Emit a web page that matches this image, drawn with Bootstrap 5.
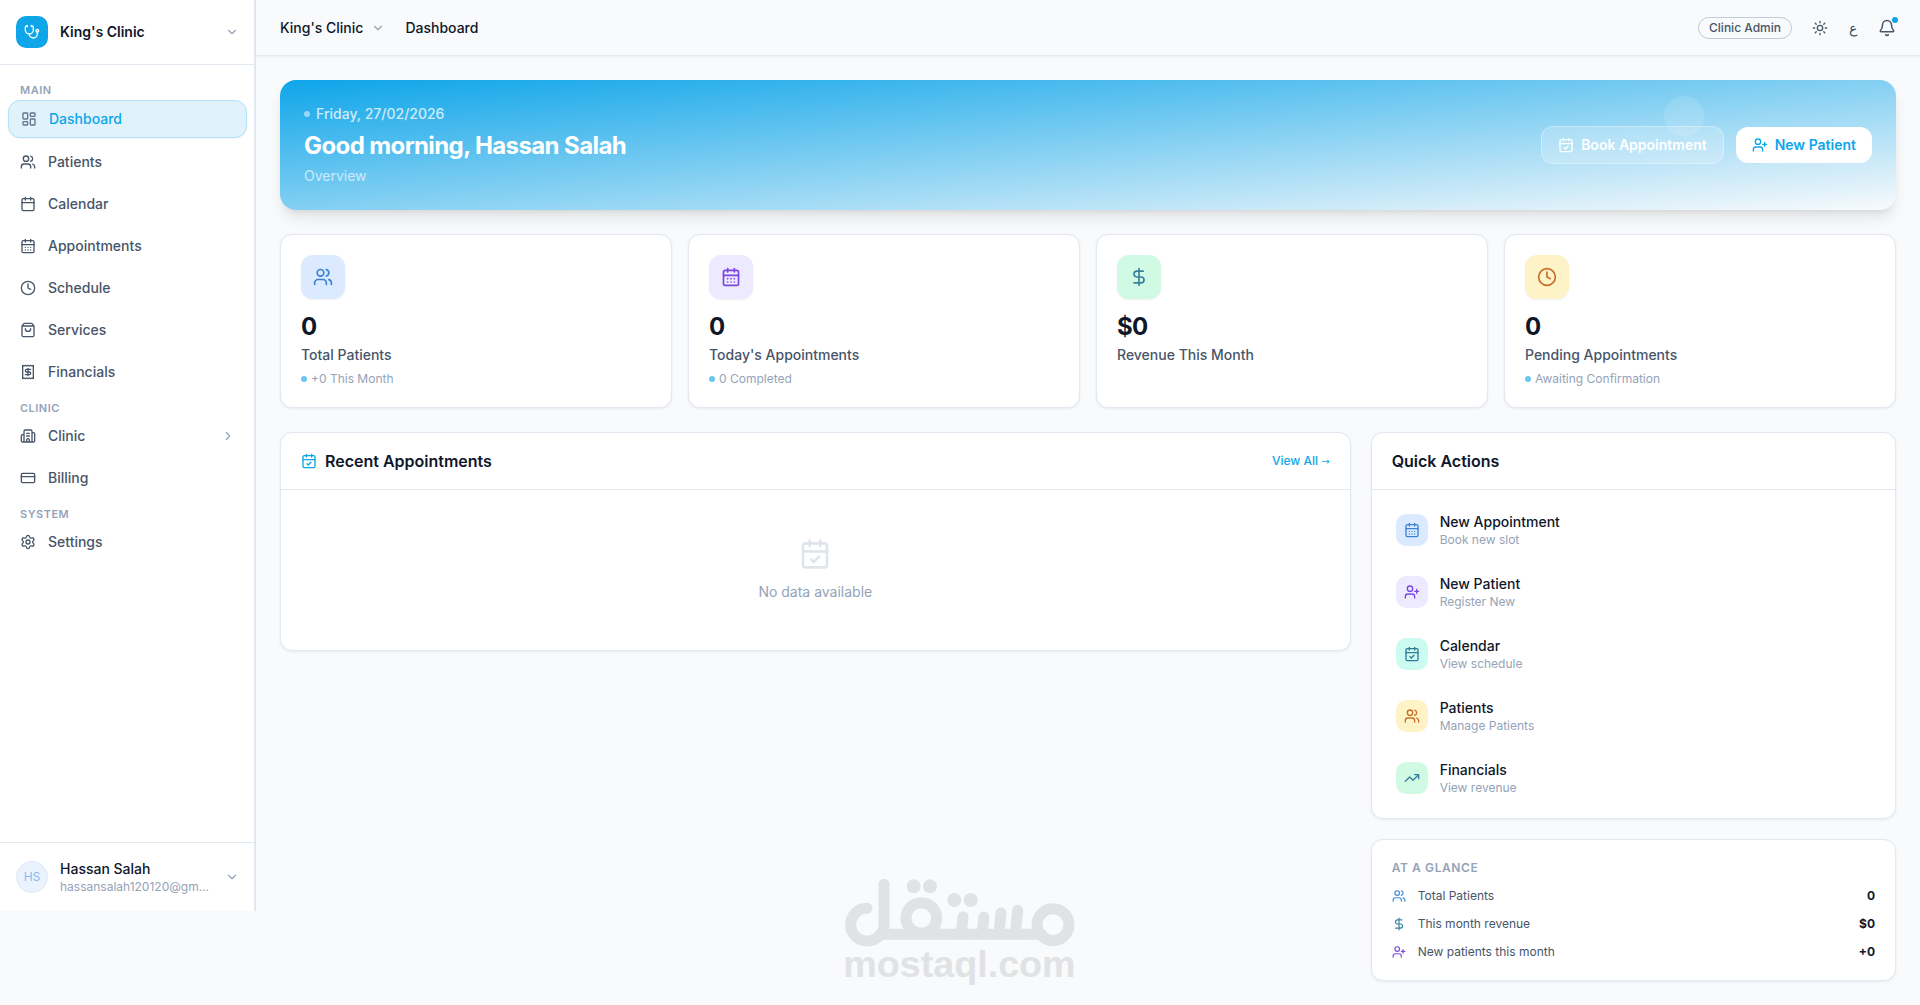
<!DOCTYPE html>
<html lang="en">
<head>
<meta charset="utf-8">
<meta name="viewport" content="width=device-width, initial-scale=1">
<title>King's Clinic – Dashboard</title>
<link href="https://cdn.jsdelivr.net/npm/bootstrap@5.3.0/dist/css/bootstrap.min.css" rel="stylesheet">
<style>
:root{--brand:#0ea5e9;--ink:#0f172a;--body:#475569;--soft:#94a3b8;--line:#e2e8f0;--page:#f8fafc}
body{font-family:Inter,"Noto Sans",sans-serif;font-size:14px;line-height:20px;color:var(--ink);background:var(--page)}
a{text-decoration:none;color:inherit}
button{font:inherit;color:inherit}
.plain-btn{background:none;border:0;padding:0;text-align:start}
.ico{width:16px;height:16px;flex:none;fill:none;stroke:currentColor;stroke-width:2;stroke-linecap:round;stroke-linejoin:round}
.ico-14{width:14px;height:14px}
.ico-18{width:18px;height:18px}
.ico-20{width:20px;height:20px}
.ico-32{width:32px;height:32px}
.fs-12{font-size:12px;line-height:16px}
.soft{color:var(--soft)}
.gap-12{gap:12px}

.side{width:256px;height:calc(100vh - 94px);background:#fff;border-right:2px solid var(--line)}
.side-head,.side-foot{padding:16px 15px 16px 16px}
.side-head{border-bottom:1px solid var(--line)}
.side-foot{border-top:1px solid var(--line)}
.logo-box{width:32px;height:32px;border-radius:10px;background:var(--brand);color:#fff}
.side-nav{padding:7px 7px 0 8px}
.nav-title{font-size:11px;line-height:16px;font-weight:600;letter-spacing:.5px;color:var(--soft);padding:10px 12px 2px;margin:0}
.nav-item-link{display:flex;align-items:center;gap:12px;padding:8px 12px;color:var(--body);font-weight:500;margin-bottom:6px}
.nav-group .nav-item-link:last-child{margin-bottom:0}
.nav-item-link.active{color:var(--brand);background:#e0f3fc;border:1px solid #b3e1f8;border-radius:12px;box-shadow:0 1px 2px rgba(15,23,42,.05)}
.nav-item-link.active .ico{color:#64748b}
.avatar{width:32px;height:32px;border-radius:50%;background:#eaf3fd;border:1px solid #dfe9f5;color:#8db9ea}

.topbar{height:56px;padding:0 24px;border-bottom:1px solid var(--line);box-shadow:0 1px 2px rgba(15,23,42,.05)}
.clinic-switch{margin-right:20px}
.top-tools{color:var(--body)}
.role{border:1px solid #c3ccda;border-radius:11px;padding:2px 10px;margin-right:20px}
.lang-btn{width:28px;margin:0 11px;text-align:center}
.bell-dot{position:absolute;width:6px;height:6px;border-radius:50%;background:var(--brand);top:-2px;right:-2px}

.page{padding:24px}
.hero{position:relative;padding:24px;border-radius:16px;background:linear-gradient(to bottom right,var(--brand),var(--page));box-shadow:0 10px 15px -3px rgba(0,0,0,.1),0 4px 6px -4px rgba(0,0,0,.1);color:#fff}
.hero-bubble{position:absolute;top:16px;right:192px;width:40px;height:40px;border-radius:50%;background:rgba(255,255,255,.12)}
.hero h1{font-size:24px;line-height:32px;font-weight:700;letter-spacing:-.6px;margin:6px 0 4px}
.hero-date{gap:6px}
.hero-sub{opacity:.65}
.dot{width:6px;height:6px;border-radius:50%;background:#6bc5f1;flex:none}
.hero .dot{background:rgba(255,255,255,.5)}
.hero-btn{position:relative;display:flex;align-items:center;gap:7px;padding:8px 16px;border:0;border-radius:12px;font-weight:600}
.hero-btn.ghost{background:rgba(255,255,255,.2);border:1px solid rgba(255,255,255,.3);color:#fff}
.hero-btn.solid{background:#fff;color:var(--brand)}

.panel{background:#fff;border:1px solid var(--line);border-radius:12px;box-shadow:0 1px 3px rgba(15,23,42,.07)}
.panel-top{padding:18px 20px;border-bottom:1px solid var(--line)}
.panel-top h2{font-size:16px;line-height:20px;font-weight:600;margin:0}
.brand-ink{color:var(--brand)}
.arrow{font-family:"DejaVu Sans",sans-serif;font-size:10px}
.stats{--bs-gutter-x:16px;margin-top:24px}
.boards{--bs-gutter-x:20px;margin-top:24px}
.stat{padding:20px;height:100%}
.tile{width:44px;height:44px;border-radius:12px;box-shadow:0 1px 2px rgba(15,23,42,.07)}
.tile-sm{width:32px;height:32px;border-radius:10px}
.figure-num{font-size:24px;line-height:32px;font-weight:700;letter-spacing:-.6px;margin-top:12px}
.stat-label{color:var(--body);font-weight:500;margin:2px 0 6px}
.blue{background:#dbeafe;color:#3b82d6}
.violet{background:#ede9fe;color:#7b47e3}
.green{background:#d1fae5;color:#37809d}
.amber{background:#fef3c7;color:#c86f2b}
.teal{background:#ccfbf1;color:#2f7b98}
.empty{padding:48px 20px}
.empty .ico{color:#e0e5eb}
.actions{padding:10px 12px;gap:2px}
.action{padding:12px}
.glance{padding:20px;margin-top:20px}
.glance h2{font-size:12px;line-height:16px;font-weight:600;letter-spacing:.6px;color:var(--soft);margin:0}
.glance-name{color:var(--body)}
.g-blue{color:#3b8fdc}
.g-green{color:#37809d}
.g-violet{color:#7c4ae6}

.watermark{position:absolute;left:50%;bottom:0;width:280px;height:145px;transform:translateX(-50%);pointer-events:none}
</style>
<script src="https://cdn.jsdelivr.net/npm/bootstrap@5.3.0/dist/js/bootstrap.bundle.min.js" defer></script>
</head>
<body>
<svg class="d-none" aria-hidden="true">
<symbol id="i-steth" viewBox="0 0 24 24"><path d="M11 2v2M5 2v2M5 3H4a2 2 0 0 0-2 2v4a6 6 0 0 0 12 0V5a2 2 0 0 0-2-2h-1M8 15a6 6 0 0 0 12 0v-3"/><circle cx="20" cy="10" r="2"/></symbol>
<symbol id="i-down" viewBox="0 0 24 24"><path d="m6 9 6 6 6-6"/></symbol>
<symbol id="i-right" viewBox="0 0 24 24"><path d="m9 18 6-6-6-6"/></symbol>
<symbol id="i-dash" viewBox="0 0 24 24"><rect width="7" height="9" x="3" y="3" rx="1"/><rect width="7" height="5" x="14" y="3" rx="1"/><rect width="7" height="9" x="14" y="12" rx="1"/><rect width="7" height="5" x="3" y="16" rx="1"/></symbol>
<symbol id="i-users" viewBox="0 0 24 24"><path d="M16 21v-2a4 4 0 0 0-4-4H6a4 4 0 0 0-4 4v2M16 3.128a4 4 0 0 1 0 7.744M22 21v-2a4 4 0 0 0-3-3.87"/><circle cx="9" cy="7" r="4"/></symbol>
<symbol id="i-cal" viewBox="0 0 24 24"><path d="M8 2v4M16 2v4M3 10h18"/><rect width="18" height="18" x="3" y="4" rx="2"/></symbol>
<symbol id="i-days" viewBox="0 0 24 24"><path d="M8 2v4M16 2v4M3 10h18M8 14h.01M12 14h.01M16 14h.01M8 18h.01M12 18h.01M16 18h.01"/><rect width="18" height="18" x="3" y="4" rx="2"/></symbol>
<symbol id="i-check" viewBox="0 0 24 24"><path d="M8 2v4M16 2v4M3 10h18m-12 6 2 2 4-4"/><rect width="18" height="18" x="3" y="4" rx="2"/></symbol>
<symbol id="i-clock" viewBox="0 0 24 24"><circle cx="12" cy="12" r="10"/><path d="M12 6v6l4 2"/></symbol>
<symbol id="i-bag" viewBox="0 0 24 24"><path d="M16 10a4 4 0 0 1-8 0M3.103 6.034h17.794M3.4 5.467a2 2 0 0 0-.4 1.2V20a2 2 0 0 0 2 2h14a2 2 0 0 0 2-2V6.667a2 2 0 0 0-.4-1.2l-2-2.667A2 2 0 0 0 17 2H7a2 2 0 0 0-1.6.8z"/></symbol>
<symbol id="i-receipt" viewBox="0 0 24 24"><path d="M4 2v20l2-1 2 1 2-1 2 1 2-1 2 1 2-1 2 1V2l-2 1-2-1-2 1-2-1-2 1-2-1-2 1ZM16 8h-6a2 2 0 1 0 0 4h4a2 2 0 1 1 0 4H8M12 17.5v-11"/></symbol>
<symbol id="i-building" viewBox="0 0 24 24"><path d="M10 12h4M10 8h4M14 21v-3a2 2 0 0 0-4 0v3M6 10H4a2 2 0 0 0-2 2v7a2 2 0 0 0 2 2h16a2 2 0 0 0 2-2V9a2 2 0 0 0-2-2h-2M6 21V5a2 2 0 0 1 2-2h8a2 2 0 0 1 2 2v16"/></symbol>
<symbol id="i-card" viewBox="0 0 24 24"><rect width="20" height="14" x="2" y="5" rx="2"/><path d="M2 10h20"/></symbol>
<symbol id="i-gear" viewBox="0 0 24 24"><path d="M9.671 4.136a2.34 2.34 0 0 1 4.659 0 2.34 2.34 0 0 0 3.319 1.915 2.34 2.34 0 0 1 2.33 4.033 2.34 2.34 0 0 0 0 3.831 2.34 2.34 0 0 1-2.33 4.033 2.34 2.34 0 0 0-3.319 1.915 2.34 2.34 0 0 1-4.659 0 2.34 2.34 0 0 0-3.32-1.915 2.34 2.34 0 0 1-2.33-4.033 2.34 2.34 0 0 0 0-3.831A2.34 2.34 0 0 1 6.35 6.051a2.34 2.34 0 0 0 3.319-1.915"/><circle cx="12" cy="12" r="3"/></symbol>
<symbol id="i-sun" viewBox="0 0 24 24"><circle cx="12" cy="12" r="4"/><path d="M12 2v2M12 20v2M4.93 4.93l1.41 1.41M17.66 17.66l1.41 1.41M2 12h2M20 12h2M6.34 17.66l-1.41 1.41M19.07 4.93l-1.41 1.41"/></symbol>
<symbol id="i-bell" viewBox="0 0 24 24"><path d="M10.268 21a2 2 0 0 0 3.464 0M3.262 15.326A1 1 0 0 0 4 17h16a1 1 0 0 0 .74-1.673C19.41 13.956 18 12.499 18 8A6 6 0 0 0 6 8c0 4.499-1.411 5.956-2.738 7.326"/></symbol>
<symbol id="i-userplus" viewBox="0 0 24 24"><path d="M16 21v-2a4 4 0 0 0-4-4H6a4 4 0 0 0-4 4v2M19 8v6M22 11h-6"/><circle cx="9" cy="7" r="4"/></symbol>
<symbol id="i-dollar" viewBox="0 0 24 24"><path d="M12 2v20M17 5H9.5a3.5 3.5 0 0 0 0 7h5a3.5 3.5 0 0 1 0 7H6"/></symbol>
<symbol id="i-trend" viewBox="0 0 24 24"><path d="M16 7h6v6M22 7l-8.5 8.5-5-5L2 17"/></symbol>
</svg>

<div class="d-flex align-items-start position-relative min-vh-100">
  <aside class="side d-flex flex-column flex-shrink-0">
    <button type="button" class="plain-btn side-head d-flex align-items-center gap-12">
      <span class="logo-box d-flex align-items-center justify-content-center"><svg class="ico"><use href="#i-steth"/></svg></span>
      <span class="fw-semibold flex-grow-1">King's Clinic</span>
      <svg class="ico ico-14 soft"><use href="#i-down"/></svg>
    </button>
    <nav class="side-nav flex-grow-1" aria-label="Main navigation">
      <div class="nav-group">
        <p class="nav-title">MAIN</p>
        <a class="nav-item-link active" href="#" aria-current="page"><svg class="ico"><use href="#i-dash"/></svg>Dashboard</a>
        <a class="nav-item-link" href="#"><svg class="ico"><use href="#i-users"/></svg>Patients</a>
        <a class="nav-item-link" href="#"><svg class="ico"><use href="#i-cal"/></svg>Calendar</a>
        <a class="nav-item-link" href="#"><svg class="ico"><use href="#i-days"/></svg>Appointments</a>
        <a class="nav-item-link" href="#"><svg class="ico"><use href="#i-clock"/></svg>Schedule</a>
        <a class="nav-item-link" href="#"><svg class="ico"><use href="#i-bag"/></svg>Services</a>
        <a class="nav-item-link" href="#"><svg class="ico"><use href="#i-receipt"/></svg>Financials</a>
      </div>
      <div class="nav-group">
        <p class="nav-title">CLINIC</p>
        <a class="nav-item-link" href="#"><svg class="ico"><use href="#i-building"/></svg><span class="flex-grow-1">Clinic</span><svg class="ico ico-14 soft"><use href="#i-right"/></svg></a>
        <a class="nav-item-link" href="#"><svg class="ico"><use href="#i-card"/></svg>Billing</a>
      </div>
      <div class="nav-group">
        <p class="nav-title">SYSTEM</p>
        <a class="nav-item-link" href="#"><svg class="ico"><use href="#i-gear"/></svg>Settings</a>
      </div>
    </nav>
    <button type="button" class="plain-btn side-foot d-flex align-items-center gap-12">
      <span class="avatar fs-12 d-flex align-items-center justify-content-center flex-shrink-0">HS</span>
      <span class="flex-grow-1">
        <span class="d-block fw-medium">Hassan Salah</span>
        <span class="d-block fs-12 soft">hassansalah120120@gm...</span>
      </span>
      <svg class="ico ico-14 soft"><use href="#i-down"/></svg>
    </button>
  </aside>

  <div class="flex-grow-1">
    <header class="topbar d-flex align-items-center justify-content-between">
      <div class="d-flex align-items-center fw-medium">
        <button type="button" class="plain-btn clinic-switch d-flex align-items-center gap-2">King's Clinic <svg class="ico ico-14 soft"><use href="#i-down"/></svg></button>
        <span>Dashboard</span>
      </div>
      <div class="top-tools d-flex align-items-center">
        <span class="role fs-12 fw-medium">Clinic Admin</span>
        <button type="button" class="plain-btn d-flex" aria-label="Theme"><svg class="ico"><use href="#i-sun"/></svg></button>
        <button type="button" class="plain-btn lang-btn" lang="ar">ع</button>
        <button type="button" class="plain-btn d-flex position-relative" aria-label="Notifications"><svg class="ico ico-18"><use href="#i-bell"/></svg><span class="bell-dot"></span></button>
      </div>
    </header>

    <main class="page">
      <section class="hero d-flex align-items-center justify-content-between">
        <span class="hero-bubble"></span>
        <div>
          <div class="hero-date d-flex align-items-center fw-medium"><span class="dot"></span><span class="opacity-75">Friday, 27/02/2026</span></div>
          <h1>Good morning, Hassan Salah</h1>
          <div class="hero-sub">Overview</div>
        </div>
        <div class="d-flex align-items-center gap-12">
          <button type="button" class="hero-btn ghost"><svg class="ico"><use href="#i-check"/></svg>Book Appointment</button>
          <button type="button" class="hero-btn solid"><svg class="ico"><use href="#i-userplus"/></svg>New Patient</button>
        </div>
      </section>

      <section class="row stats">
        <div class="col-3"><div class="panel stat">
          <div class="tile blue d-flex align-items-center justify-content-center"><svg class="ico ico-20"><use href="#i-users"/></svg></div>
          <div class="figure-num">0</div><div class="stat-label">Total Patients</div>
          <div class="d-flex align-items-center gap-1 fs-12 soft"><span class="dot"></span>+0 This Month</div>
        </div></div>
        <div class="col-3"><div class="panel stat">
          <div class="tile violet d-flex align-items-center justify-content-center"><svg class="ico ico-20"><use href="#i-days"/></svg></div>
          <div class="figure-num">0</div><div class="stat-label">Today's Appointments</div>
          <div class="d-flex align-items-center gap-1 fs-12 soft"><span class="dot"></span>0 Completed</div>
        </div></div>
        <div class="col-3"><div class="panel stat">
          <div class="tile green d-flex align-items-center justify-content-center"><svg class="ico ico-20"><use href="#i-dollar"/></svg></div>
          <div class="figure-num">$0</div><div class="stat-label">Revenue This Month</div>
        </div></div>
        <div class="col-3"><div class="panel stat">
          <div class="tile amber d-flex align-items-center justify-content-center"><svg class="ico ico-20"><use href="#i-clock"/></svg></div>
          <div class="figure-num">0</div><div class="stat-label">Pending Appointments</div>
          <div class="d-flex align-items-center gap-1 fs-12 soft"><span class="dot"></span>Awaiting Confirmation</div>
        </div></div>
      </section>

      <div class="row boards align-items-start">
        <div class="col-8">
          <section class="panel">
            <div class="panel-top d-flex align-items-center gap-2">
              <svg class="ico brand-ink"><use href="#i-check"/></svg>
              <h2 class="flex-grow-1">Recent Appointments</h2>
              <a href="#" class="fs-12 fw-medium brand-ink">View All <span class="arrow">→</span></a>
            </div>
            <div class="empty d-flex flex-column align-items-center gap-12 soft">
              <svg class="ico ico-32"><use href="#i-check"/></svg>
              <span>No data available</span>
            </div>
          </section>
        </div>
        <div class="col-4">
          <section class="panel">
            <div class="panel-top"><h2>Quick Actions</h2></div>
            <div class="actions d-flex flex-column">
              <a href="#" class="action d-flex align-items-center gap-12"><span class="tile-sm blue d-flex align-items-center justify-content-center"><svg class="ico"><use href="#i-days"/></svg></span><span><span class="d-block fw-medium">New Appointment</span><span class="d-block fs-12 soft">Book new slot</span></span></a>
              <a href="#" class="action d-flex align-items-center gap-12"><span class="tile-sm violet d-flex align-items-center justify-content-center"><svg class="ico"><use href="#i-userplus"/></svg></span><span><span class="d-block fw-medium">New Patient</span><span class="d-block fs-12 soft">Register New</span></span></a>
              <a href="#" class="action d-flex align-items-center gap-12"><span class="tile-sm teal d-flex align-items-center justify-content-center"><svg class="ico"><use href="#i-check"/></svg></span><span><span class="d-block fw-medium">Calendar</span><span class="d-block fs-12 soft">View schedule</span></span></a>
              <a href="#" class="action d-flex align-items-center gap-12"><span class="tile-sm amber d-flex align-items-center justify-content-center"><svg class="ico"><use href="#i-users"/></svg></span><span><span class="d-block fw-medium">Patients</span><span class="d-block fs-12 soft">Manage Patients</span></span></a>
              <a href="#" class="action d-flex align-items-center gap-12"><span class="tile-sm green d-flex align-items-center justify-content-center"><svg class="ico"><use href="#i-trend"/></svg></span><span><span class="d-block fw-medium">Financials</span><span class="d-block fs-12 soft">View revenue</span></span></a>
            </div>
          </section>
          <section class="panel glance d-flex flex-column gap-12 fs-12">
            <h2>AT A GLANCE</h2>
            <div class="d-flex align-items-center gap-12"><svg class="ico ico-14 g-blue"><use href="#i-users"/></svg><span class="glance-name flex-grow-1">Total Patients</span><strong>0</strong></div>
            <div class="d-flex align-items-center gap-12"><svg class="ico ico-14 g-green"><use href="#i-dollar"/></svg><span class="glance-name flex-grow-1">This month revenue</span><strong>$0</strong></div>
            <div class="d-flex align-items-center gap-12"><svg class="ico ico-14 g-violet"><use href="#i-userplus"/></svg><span class="glance-name flex-grow-1">New patients this month</span><strong>+0</strong></div>
          </section>
        </div>
      </div>
    </main>
  </div>

  <svg class="watermark" viewBox="0 0 840 435" role="img" aria-label="mostaql.com">
    <g fill="none" stroke="#e1e2e4" stroke-width="33" stroke-linecap="round">
      <path d="M141 145A49 49 0 0 0 141 243C170 243 192 222 192 194V73"/>
      <path d="M180 223H665"/>
      <circle cx="304" cy="174" r="46"/>
      <path d="M429 171 424 220M492 171 486 222M543 159 537 222M593 151 586 222"/>
      <circle cx="699" cy="194" r="48"/>
    </g>
    <g fill="#e1e2e4">
      <circle cx="281" cy="79" r="21"/><circle cx="330" cy="79" r="21"/><circle cx="403" cy="120" r="21"/><circle cx="452" cy="120" r="21"/>
      <text x="70" y="351" font-family="Liberation Sans, sans-serif" font-weight="700" font-size="113">mostaql.com</text>
    </g>
  </svg>
</div>
</body>
</html>
